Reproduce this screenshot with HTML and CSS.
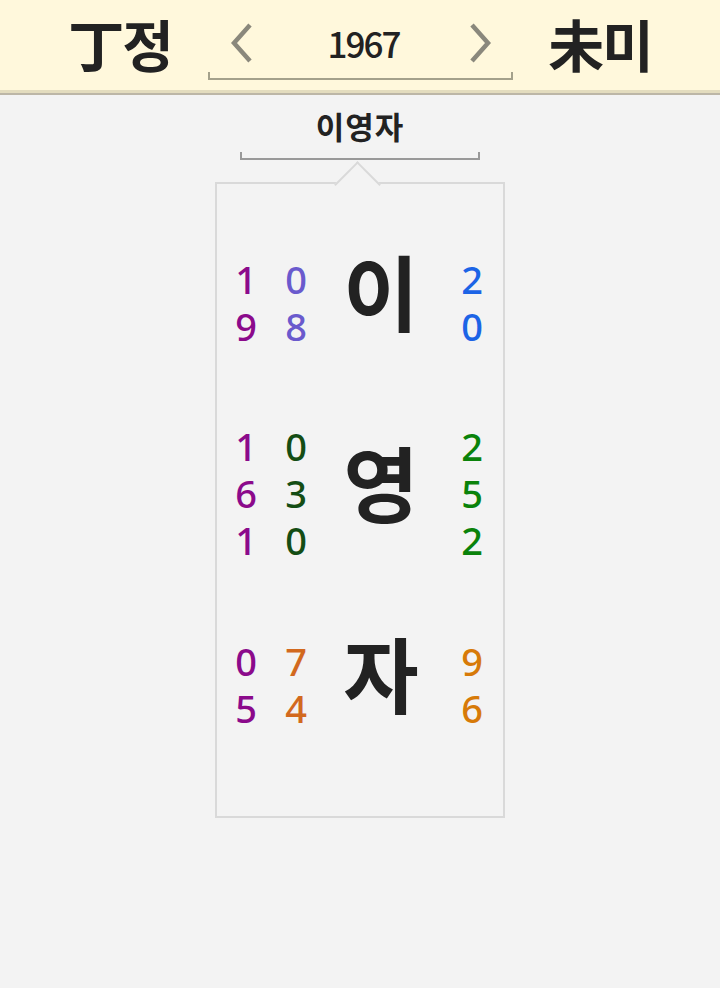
FILE: index.html
```html
<!DOCTYPE html>
<html lang="ko">
<head>
    <meta charset="UTF-8">
    <meta name="viewport" content="width=device-width, initial-scale=1.0">
    <title>이영자 1967</title>
    <link rel="stylesheet" href="styles.css">
</head>
<body>
    <header class="topbar">
        <div class="ganji">丁정</div>
        <div class="year-nav">
            <span class="arrow">
                <svg width="24" height="40" viewBox="0 0 24 40"><polyline points="21,2 5,20 21,38" fill="none" stroke="#8a887c" stroke-width="4.5"/></svg>
            </span>
            <span class="year">1967</span>
            <span class="arrow">
                <svg width="24" height="40" viewBox="0 0 24 40"><polyline points="3,2 19,20 3,38" fill="none" stroke="#8a887c" stroke-width="4.5"/></svg>
            </span>
        </div>
        <div class="ganji">未미</div>
    </header>

    <main>
        <div class="name-title">
            <h1>이영자</h1>
        </div>

        <div class="card">
            <div class="pointer"></div>

            <div class="row">
                <div class="nums c-purple"><span>1</span><span>9</span></div>
                <div class="nums c-slate"><span>0</span><span>8</span></div>
                <div class="syllable">이</div>
                <div class="nums c-blue"><span>2</span><span>0</span></div>
            </div>

            <div class="row">
                <div class="nums c-purple"><span>1</span><span>6</span><span>1</span></div>
                <div class="nums c-darkgreen"><span>0</span><span>3</span><span>0</span></div>
                <div class="syllable">영</div>
                <div class="nums c-green"><span>2</span><span>5</span><span>2</span></div>
            </div>

            <div class="row">
                <div class="nums c-purple"><span>0</span><span>5</span></div>
                <div class="nums c-chocolate"><span>7</span><span>4</span></div>
                <div class="syllable">자</div>
                <div class="nums c-orange"><span>9</span><span>6</span></div>
            </div>
        </div>
    </main>
</body>
</html>
```

FILE: styles.css
```css
body {
    margin: 0;
    background: #f3f3f3;
    font-family: "Noto Sans CJK KR", "Noto Sans", sans-serif;
    color: #222;
}

/* top bar */
.topbar {
    height: 90px;
    background: #fff8dc;
    border-bottom: 3px solid #e3dcbe;
    box-shadow: 0 2px 0 #bcb6a6;
    display: flex;
    justify-content: center;
    align-items: center;
    gap: 35px;
    margin-bottom: 2px;
}
.ganji {
    font-size: 56px;
    font-weight: 700;
    line-height: 1;
    width: 105px;
    text-align: center;
    letter-spacing: -2px;
    padding-bottom: 4px;
}
.year-nav {
    width: 305px;
    box-sizing: border-box;
    display: flex;
    align-items: center;
    justify-content: space-between;
    padding: 2px 18px 0 19px;
    height: 62px;
    margin-top: 8px;
    border: 2px solid #a4a18b;
    border-top: none;
    position: relative;
}
.year-nav::before {
    content: "";
    position: absolute;
    left: -2px;
    right: -2px;
    top: 0;
    bottom: 6px;
    background: #fff8dc;
}
.arrow, .year {
    position: relative;
    display: flex;
    margin-bottom: 12px;
}
.year {
    font-size: 35px;
    font-weight: 500;
    letter-spacing: -2px;
    padding-left: 6px;
    margin-bottom: 14px;
}

/* name with bracket */
.name-title {
    width: 240px;
    margin: 0 auto;
    padding-top: 13px;
    height: 65px;
    border: 2px solid #999;
    border-top: none;
    position: relative;
    box-sizing: border-box;
}
.name-title::before {
    content: "";
    position: absolute;
    left: -2px;
    right: -2px;
    top: 0;
    bottom: 6px;
    background: #f3f3f3;
}
.name-title h1 {
    position: relative;
    margin: 0;
    text-align: center;
    font-size: 31px;
    font-weight: 700;
    line-height: 36px;
    letter-spacing: 1px;
}

/* card */
.card {
    width: 290px;
    box-sizing: border-box;
    margin: 22px auto 0;
    padding: 23px 6px 36px 4px;
    border: 2px solid #d9d9d9;
    position: relative;
}
.pointer {
    position: absolute;
    top: -16px;
    left: 124px;
    width: 31px;
    height: 31px;
    background: #f3f3f3;
    border-top: 2px solid #d9d9d9;
    border-left: 2px solid #d9d9d9;
    transform: rotate(45deg);
}
.row {
    height: 191px;
    display: grid;
    grid-template-columns: 50px 50px 1fr 50px;
    align-items: center;
}
.nums {
    display: flex;
    flex-direction: column;
    align-items: center;
    font-family: "Noto Sans", sans-serif;
    font-size: 38px;
    font-weight: 500;
    line-height: 47px;
}
.syllable {
    text-align: center;
    font-size: 82px;
    font-weight: 700;
    line-height: 1;
    padding-right: 6px;
    margin-top: -26px;
}

.c-purple { color: #8b0a8b; }
.c-slate { color: #6a5acd; }
.c-blue { color: #1c64e6; }
.c-darkgreen { color: #144d14; }
.c-green { color: #0a820a; }
.c-chocolate { color: #d2691e; }
.c-orange { color: #d77a08; }
```
